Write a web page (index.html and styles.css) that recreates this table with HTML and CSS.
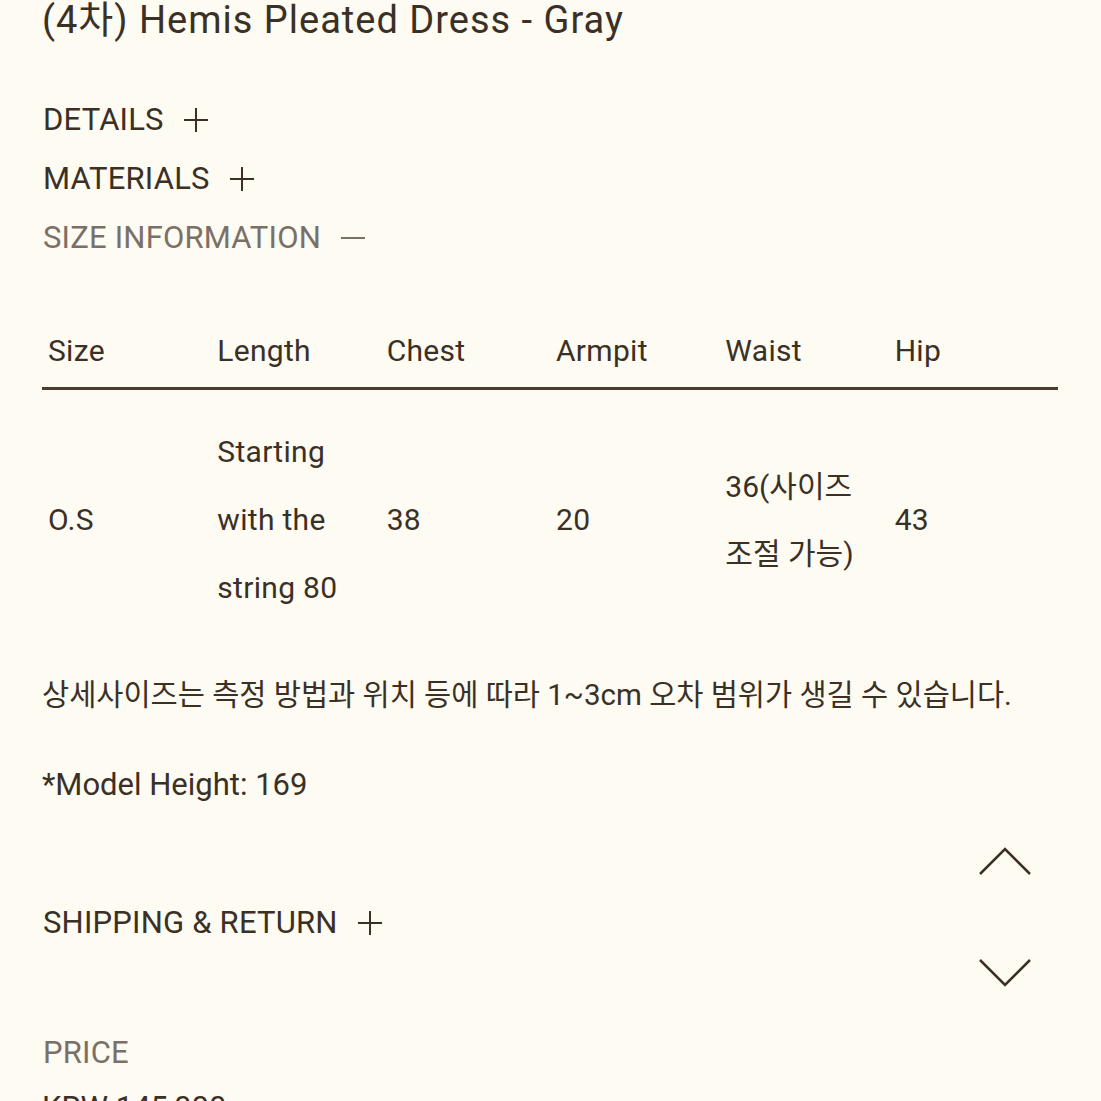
FILE: index.html
```html
<!DOCTYPE html>
<html lang="ko">
<head>
  <meta charset="UTF-8">
  <meta name="viewport" content="width=device-width, initial-scale=1.0">
  <title>(4차) Hemis Pleated Dress - Gray</title>
  <link rel="stylesheet" href="styles.css">
</head>
<body>
  <div class="product">
    <h1 class="title">(4차) Hemis Pleated Dress - Gray</h1>

    <div class="accordion">
      <div class="acc-row">
        <span>DETAILS</span>
        <svg class="acc-icon" viewBox="0 0 26 26"><path d="M13 1v24M1 13h24"/></svg>
      </div>
      <div class="acc-row">
        <span>MATERIALS</span>
        <svg class="acc-icon" viewBox="0 0 26 26"><path d="M13 1v24M1 13h24"/></svg>
      </div>
      <div class="acc-row open">
        <span>SIZE INFORMATION</span>
        <svg class="acc-icon" viewBox="0 0 26 26"><path d="M1 13h24"/></svg>
      </div>
    </div>

    <div class="size-table">
      <div class="size-head">
        <div>Size</div>
        <div>Length</div>
        <div>Chest</div>
        <div>Armpit</div>
        <div>Waist</div>
        <div>Hip</div>
      </div>
      <div class="size-body">
        <div>O.S</div>
        <div>Starting with the string 80</div>
        <div>38</div>
        <div>20</div>
        <div class="kr">36(사이즈 조절 가능)</div>
        <div>43</div>
      </div>
    </div>

    <p class="note">상세사이즈는 측정 방법과 위치 등에 따라 1~3cm 오차 범위가 생길 수 있습니다.</p>
    <p class="model">*Model Height: 169</p>

    <div class="acc-row shipping">
      <span>SHIPPING &amp; RETURN</span>
      <svg class="acc-icon" viewBox="0 0 26 26"><path d="M13 1v24M1 13h24"/></svg>
    </div>

    <div class="acc-row open price-label">
      <span>PRICE</span>
    </div>
    <p class="price">KRW 145,000</p>
  </div>

  <div class="scroll-btns">
    <svg class="chevron" viewBox="0 0 54 30"><path d="M2 27L27 2l25 25"/></svg>
    <svg class="chevron" viewBox="0 0 54 30"><path d="M2 3l25 25 25-25"/></svg>
  </div>
</body>
</html>
```

FILE: styles.css
```css
body {
  margin: 0;
  background-color: #fdfbf2;
  color: #3b3026;
  font-family: Roboto, "Noto Sans CJK KR", sans-serif;
  overflow: hidden;
}

.product {
  padding: 0 42px;
  width: 1016px;
}

.title {
  margin: 0;
  font-size: 38px;
  font-weight: 400;
  line-height: 40px;
  letter-spacing: 1px;
}

.accordion {
  margin-top: 50px;
}

.acc-row {
  display: flex;
  align-items: center;
  gap: 19px;
  height: 59px;
  font-size: 31px;
  letter-spacing: 0.2px;
  padding-left: 1px;
}

.acc-row.open {
  color: #7b7067;
}

.acc-icon {
  width: 26px;
  height: 26px;
  fill: none;
  stroke: currentColor;
  stroke-width: 2;
}

.size-table {
  margin-top: 46px;
  font-size: 30px;
  letter-spacing: 0.3px;
}

.size-head,
.size-body {
  display: grid;
  grid-template-columns: repeat(6, 1fr);
}

.size-head > div,
.size-body > div {
  padding-left: 6px;
  padding-right: 6px;
}

.size-head {
  height: 74px;
  align-items: center;
  border-bottom: 3px solid #4b3d2e;
}

.size-body {
  padding-top: 28px;
  line-height: 68px;
  align-items: center;
}

.size-body .kr {
  line-height: 67px;
  word-break: keep-all;
  letter-spacing: 0;
}

.note {
  margin: 53px 0 0;
  font-size: 29.5px;
  line-height: 40px;
}

.model {
  margin: 50px 0 0;
  font-size: 31px;
  line-height: 40px;
}

.shipping {
  margin-top: 88px;
}

.price-label {
  margin-top: 71px;
}

.price {
  margin: 6px 0 0;
  font-size: 31px;
  line-height: 40px;
}

.scroll-btns {
  position: fixed;
  left: 978px;
  top: 847px;
  display: flex;
  flex-direction: column;
  gap: 80px;
}

.chevron {
  width: 54px;
  height: 30px;
  fill: none;
  stroke: #3b3026;
  stroke-width: 2.5;
}
```
